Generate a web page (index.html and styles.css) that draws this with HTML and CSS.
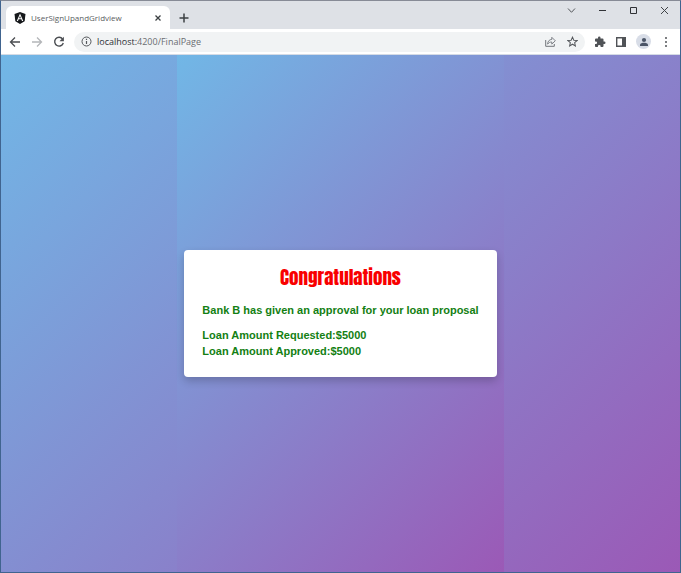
FILE: index.html
```html
<!DOCTYPE html>
<html lang="en">
<head>
<meta charset="utf-8">
<title>UserSignUpandGridview</title>
<link rel="stylesheet" href="styles.css">
</head>
<body>
<div class="window">
  <header class="tabstrip">
    <div class="tab">
      <svg class="favicon" width="12" height="12" viewBox="0 0 24 24"><path fill="#16181b" d="M12 0 23 4 21.300 18.500 12 24 2.700 18.500 1 4z"/><path fill="#fff" d="M12 3 5.500 18H8l1.300-3.300h5.400L16 18h2.500zm0 4.900 1.900 4.700h-3.800z"/></svg>
      <span class="tab-title">UserSignUpandGridview</span>
      <button class="icon tab-close" aria-label="Close tab"><svg width="8" height="8" viewBox="0 0 8 8"><path d="M1.500 1.500l5 5M6.500 1.500l-5 5" stroke="#3c4043" stroke-width="1.300"/></svg></button>
    </div>
    <button class="icon new-tab" aria-label="New tab"><svg width="10" height="10" viewBox="0 0 10 10"><path d="M5 .5v9M.5 5h9" stroke="#3c4043" stroke-width="1.500"/></svg></button>
    <div class="controls">
      <button class="icon" aria-label="Search tabs"><svg width="9" height="9" viewBox="0 0 9 9"><path d="M1 2.500l3.500 3.800L8 2.500" fill="none" stroke="#55585c"/></svg></button>
      <button class="icon" aria-label="Minimize"><svg width="9" height="9" viewBox="0 0 9 9"><path d="M1 4.500h7" stroke="#303236"/></svg></button>
      <button class="icon" aria-label="Maximize"><svg width="9" height="9" viewBox="0 0 9 9"><path d="M1.500 1.500h6v6h-6z" fill="none" stroke="#303236"/></svg></button>
      <button class="icon" aria-label="Close"><svg width="9" height="9" viewBox="0 0 9 9"><path d="M1 1l7 7M8 1L1 8" stroke="#404347"/></svg></button>
    </div>
  </header>
  <nav class="toolbar">
    <div class="history">
      <button class="icon" aria-label="Back"><svg width="12" height="12" viewBox="0 0 12 12"><path d="M11 6H2M6 1.500L1.500 6 6 10.500" fill="none" stroke="#4b4e52" stroke-width="1.300"/></svg></button>
      <button class="icon" aria-label="Forward"><svg width="12" height="12" viewBox="0 0 12 12"><path d="M1 6h9M6 1.500L10.500 6 6 10.500" fill="none" stroke="#b4b6b9" stroke-width="1.300"/></svg></button>
      <button class="icon" aria-label="Reload"><svg width="12" height="12" viewBox="0 0 12 12"><path d="M9.600 3A4.400 4.400 0 1 0 10.300 7" fill="none" stroke="#4b4e52" stroke-width="1.400"/><path d="M10.900.8v4.400H6.500z" fill="#4b4e52"/></svg></button>
    </div>
    <div class="omnibox">
      <svg width="11" height="11" viewBox="0 0 11 11"><circle cx="5.500" cy="5.500" r="4.500" fill="none" stroke="#55585c"/><path d="M5.500 5v3M5.500 2.800v1.200" stroke="#55585c" stroke-width="1.200"/></svg>
      <a class="url" href="#">localhost:<span class="path">4200/FinalPage</span></a>
      <div class="actions">
        <button class="icon" aria-label="Share"><svg width="11" height="11" viewBox="0 0 11 11"><path d="M.7 4v6.300h8.600V8" fill="none" stroke="#72757a"/><path d="M2.600 8.200C2.700 5.200 4.400 3.500 6.800 3.400V1.300l3.500 3.500-3.500 3.300V6C5 6 3.600 6.600 2.600 8.200z" fill="none" stroke="#72757a" stroke-width=".9"/></svg></button>
        <button class="icon" aria-label="Bookmark"><svg width="11" height="11" viewBox="0 0 24 24"><path d="M12 2.500l2.900 6.700 7.300.6-5.500 4.800 1.600 7.100-6.300-3.800-6.300 3.800 1.600-7.100-5.500-4.800 7.300-.6z" fill="none" stroke="#55585c" stroke-width="2.200"/></svg></button>
      </div>
    </div>
    <button class="icon" aria-label="Extensions"><svg width="12" height="12" viewBox="0 0 24 24"><path fill="#505357" d="M20.500 11H19V7a2 2 0 0 0-2-2h-4V3.500a2.500 2.500 0 0 0-5 0V5H4a2 2 0 0 0-2 2v3.800h1.500a2.700 2.700 0 0 1 0 5.400H2V20c0 1.100.9 2 2 2h3.800v-1.500a2.700 2.700 0 0 1 5.400 0V22H17a2 2 0 0 0 2-2v-4h1.500a2.500 2.500 0 0 0 0-5z"/></svg></button>
    <button class="icon" aria-label="Side panel"><svg width="12" height="12" viewBox="0 0 12 12"><path d="M1.700 1.700h8.600v8.600H1.700z" fill="none" stroke="#505357" stroke-width="1.400"/><path d="M7 1h4v10H7z" fill="#505357"/></svg></button>
    <button class="icon profile" aria-label="Profile"><svg width="10" height="10" viewBox="0 0 10 10"><circle cx="5" cy="3" r="2.100" fill="#4b5567"/><path d="M1 9V7.700C1 6.400 3.500 5.800 5 5.800s4 .6 4 1.900V9z" fill="#4b5567"/></svg></button>
    <button class="icon" aria-label="Menu"><svg width="12" height="12" viewBox="0 0 12 12" fill="#505357"><circle cx="6" cy="2" r="1"/><circle cx="6" cy="6" r="1"/><circle cx="6" cy="10" r="1"/></svg></button>
  </nav>
  <main class="page">
    <div class="panel">
      <section class="card">
        <h1>Congratulations</h1>
        <p>Bank B has given an approval for your loan proposal</p>
        <p>Loan Amount Requested:$5000<br>Loan Amount Approved:$5000</p>
      </section>
    </div>
  </main>
</div>
</body>
</html>
```
FILE: styles.css
```css
* { box-sizing: border-box; }
body { margin: 0; font-family: "Liberation Sans", Arial, sans-serif; }
.window {
  min-height: 100vh;
  display: flex;
  flex-direction: column;
  border: 1px solid #40648f;
  border-top-color: #878b96;
}
.icon {
  display: grid;
  place-items: center;
  flex: none;
  padding: 0;
  border: 0;
  background: none;
}
svg { display: block; flex: none; }
.tabstrip {
  display: flex;
  height: 28px;
  background: #dee1e6;
}
.tab {
  display: flex;
  align-items: center;
  width: 164px;
  margin: 5px 0 0 5px;
  padding: 0 8px;
  border-radius: 6px 6px 0 0;
  background: #fff;
}
.tab-title {
  flex: 1;
  margin-left: 5px;
  font: 8px "Open Sans", sans-serif;
  color: #5a5d61;
}
.new-tab { width: 28px; padding-top: 5px; }
.controls { display: flex; margin-left: auto; height: 18px; }
.controls .icon { width: 31px; }
.toolbar {
  display: flex;
  align-items: center;
  gap: 9px;
  height: 26px;
  padding: 0 8px;
  border-bottom: 1px solid #d5dbe5;
  background: #fff;
}
.history { display: flex; gap: 10px; }
.omnibox {
  flex: 1;
  display: flex;
  align-items: center;
  gap: 5px;
  height: 20px;
  padding: 0 7px;
  border-radius: 10px;
  background: #f1f3f4;
}
.url {
  flex: 1;
  font: 9px "Open Sans", sans-serif;
  color: #303236;
  text-decoration: none;
}
.path { color: #6a6d71; }
.actions { display: flex; gap: 11px; }
.profile {
  width: 15px;
  height: 15px;
  border-radius: 50%;
  background: #d8dde7;
}
.page {
  flex: 1;
  display: flex;
  justify-content: center;
  background: linear-gradient(135deg, #71b7e6, #9b59b6);
}
.panel {
  display: flex;
  align-items: center;
  padding: 0 7px;
  background: linear-gradient(135deg, #71b7e6, #9b59b6);
}
.card {
  padding: 15px 18px 18px;
  border-radius: 4px;
  background: #fff;
  box-shadow: 0 4px 8px rgba(0, 0, 0, .2);
  color: #138013;
  font-size: 11px;
  font-weight: bold;
  line-height: 16px;
}
h1 {
  margin: 0 0 13px;
  color: #f80000;
  font: 19px/24px Impact, Anton, "Liberation Sans Narrow", sans-serif;
  text-align: center;
}
p { margin: 0 0 9px; }
p:last-child { margin: 0; }
```
